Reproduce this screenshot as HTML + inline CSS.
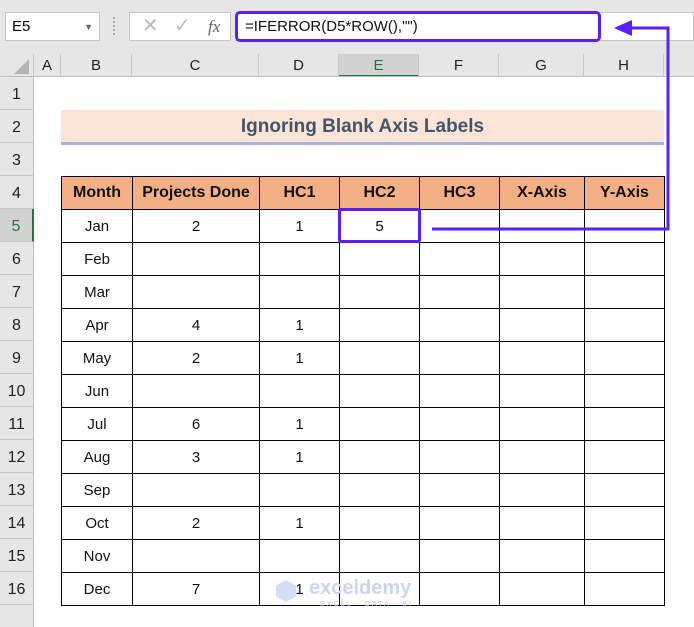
<!DOCTYPE html><html><head><style>
body{margin:0;width:694px;height:627px;background:#fff;position:relative;overflow:hidden;font-family:"Liberation Sans",Calibri,sans-serif}
.a{position:absolute}
.ch{position:absolute;top:54px;height:23px;border-right:1px solid #c8c8c8;text-align:center;line-height:24px;font-size:15px;color:#222;box-sizing:border-box}
.rh{position:absolute;left:0;width:34px;height:33px;border-bottom:1px solid #c8c8c8;background:#e6e6e6;box-sizing:border-box;text-align:center;line-height:36px;font-size:16px;color:#222;border-right:1px solid #bdbdbd}
table{position:absolute;left:61px;top:176px;border-collapse:collapse;font-family:"Liberation Sans",Carlito,sans-serif;font-size:15px;table-layout:fixed}
tr{height:33px}
td{border:1.5px solid #000;padding:0;text-align:center;color:#111}
tr.h td{background:#f4b084;font-weight:bold;font-size:16px}
</style></head><body>
<div class="a" style="left:0;top:0;width:694px;height:54px;background:#e6e6e6"></div>
<div class="a" style="left:5px;top:12px;width:95px;height:29px;background:#fff;border:1px solid #c6c6c6;box-sizing:border-box;font-size:15px;line-height:28px;padding-left:6px">E5<span style="position:absolute;right:6px;top:0;font-size:9px;color:#666">▼</span></div>
<div class="a" style="left:113px;top:17px;width:2px;height:18px;border-left:2px dotted #aaa"></div>
<div class="a" style="left:129px;top:12px;width:102px;height:29px;background:#fff;border:1px solid #c6c6c6;box-sizing:border-box;color:#bbb;font-size:20px;line-height:27px"><span style="position:absolute;left:12px">✕</span><span style="position:absolute;left:44px">✓</span><span style="position:absolute;left:78px;color:#666;font-family:'Liberation Serif',serif;font-style:italic;font-size:17px">fx</span></div>
<div class="a" style="left:236px;top:12px;width:458px;height:29px;background:#fff;border:1px solid #c6c6c6;box-sizing:border-box"></div>
<div class="a" style="left:235px;top:11px;width:366px;height:31px;border:3px solid #5b1fff;border-radius:5px;box-sizing:border-box;background:#fff;font-size:15px;line-height:25px;padding-left:7px;color:#111">=IFERROR(D5*ROW(),"")</div>
<div class="ch" style="left:0;width:34px;background:#e6e6e6"><svg width="22" height="22" style="position:absolute;left:9px;top:0"><polygon points="20,5 20,20 5,20" fill="#b4b4b4"/></svg></div>
<div class="ch" style="left:34px;width:27px;background:#e6e6e6">A</div>
<div class="ch" style="left:61px;width:71px;background:#e6e6e6">B</div>
<div class="ch" style="left:132px;width:127px;background:#e6e6e6">C</div>
<div class="ch" style="left:259px;width:80px;background:#e6e6e6">D</div>
<div class="ch" style="left:339px;width:80px;background:#d2d2d2;color:#217346;border-bottom:2px solid #217346">E</div>
<div class="ch" style="left:419px;width:80px;background:#e6e6e6">F</div>
<div class="ch" style="left:499px;width:85px;background:#e6e6e6">G</div>
<div class="ch" style="left:584px;width:80px;background:#e6e6e6">H</div>
<div class="ch" style="left:664px;width:30px;background:#e6e6e6;border:none"></div>
<div class="a" style="left:0;top:76px;width:694px;height:1px;background:#bdbdbd"></div>
<div class="rh" style="top:77px">1</div><div class="rh" style="top:110px">2</div><div class="rh" style="top:143px">3</div><div class="rh" style="top:176px">4</div><div class="rh" style="top:209px;background:#d2d2d2;color:#217346;border-right:2px solid #217346">5</div><div class="rh" style="top:242px">6</div><div class="rh" style="top:275px">7</div><div class="rh" style="top:308px">8</div><div class="rh" style="top:341px">9</div><div class="rh" style="top:374px">10</div><div class="rh" style="top:407px">11</div><div class="rh" style="top:440px">12</div><div class="rh" style="top:473px">13</div><div class="rh" style="top:506px">14</div><div class="rh" style="top:539px">15</div><div class="rh" style="top:572px">16</div>
<div class="rh" style="top:605px;height:22px;border-bottom:none"></div>
<div class="a" style="left:61px;top:110px;width:603px;height:32px;background:#fce4d6;text-align:center;font-weight:bold;font-size:19px;line-height:34px;color:#44546a">Ignoring Blank Axis Labels</div>
<div class="a" style="left:61px;top:142px;width:603px;height:3px;background:#9fb4df"></div>
<table>
<colgroup><col style="width:71px"><col style="width:127px"><col style="width:80px"><col style="width:80px"><col style="width:80px"><col style="width:85px"><col style="width:80px"></colgroup>
<tr class="h"><td>Month</td><td>Projects Done</td><td>HC1</td><td>HC2</td><td>HC3</td><td>X-Axis</td><td>Y-Axis</td></tr>
<tr><td>Jan</td><td>2</td><td>1</td><td>5</td><td></td><td></td><td></td></tr>
<tr><td>Feb</td><td></td><td></td><td></td><td></td><td></td><td></td></tr>
<tr><td>Mar</td><td></td><td></td><td></td><td></td><td></td><td></td></tr>
<tr><td>Apr</td><td>4</td><td>1</td><td></td><td></td><td></td><td></td></tr>
<tr><td>May</td><td>2</td><td>1</td><td></td><td></td><td></td><td></td></tr>
<tr><td>Jun</td><td></td><td></td><td></td><td></td><td></td><td></td></tr>
<tr><td>Jul</td><td>6</td><td>1</td><td></td><td></td><td></td><td></td></tr>
<tr><td>Aug</td><td>3</td><td>1</td><td></td><td></td><td></td><td></td></tr>
<tr><td>Sep</td><td></td><td></td><td></td><td></td><td></td><td></td></tr>
<tr><td>Oct</td><td>2</td><td>1</td><td></td><td></td><td></td><td></td></tr>
<tr><td>Nov</td><td></td><td></td><td></td><td></td><td></td><td></td></tr>
<tr><td>Dec</td><td>7</td><td>1</td><td></td><td></td><td></td><td></td></tr>
</table>
<div class="a" style="left:338px;top:208px;width:83px;height:35px;border:3px solid #5b1fff;border-radius:3px;box-sizing:border-box"></div>
<svg class="a" style="left:0;top:0" width="694" height="627"><polyline points="432,229 668,229 668,28 630,28" fill="none" stroke="#5b1fff" stroke-width="3"/><polygon points="614,28 632,20 632,36" fill="#5b1fff"/></svg>
<div class="a" style="left:276px;top:580px;width:20px;height:22px;background:#c9d5f5;opacity:.8;clip-path:polygon(50% 0,100% 25%,100% 75%,50% 100%,0 75%,0 25%)"></div>
<div class="a" style="left:309px;top:577px;font-size:20px;font-weight:bold;color:#c9d5f5">exceldemy</div>
<div class="a" style="left:320px;top:601px;font-size:7px;color:#c4c4c4;letter-spacing:2px">EXCEL · DATA · BI</div>
</body></html>
